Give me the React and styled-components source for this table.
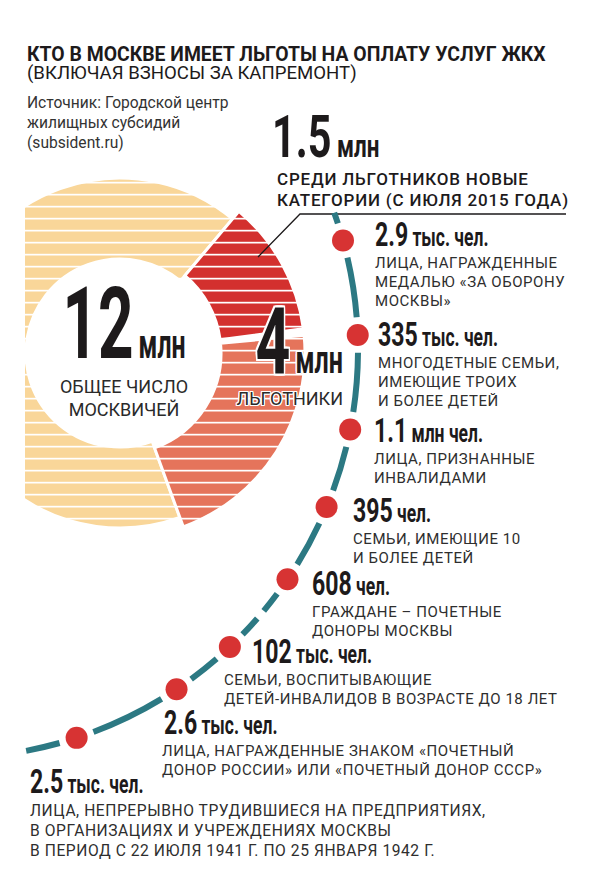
import React from 'react';
import styled, { createGlobalStyle } from 'styled-components';

const GlobalStyle = createGlobalStyle`
  html, body {
    margin: 0;
    padding: 0;
    background: #fff;
  }
  body {
    font-family: Roboto, "Liberation Sans", sans-serif;
    color: #231f20;
  }
`;

const YELLOW = '#f9d699';
const RED = '#d3302e';
const SALMON = '#e5745b';
const TEAL = '#2c7983';
const DOT = '#d73333';

// donut
const DC = { x: 120, y: 353 };
// dashed arc
const AC = { x: -50, y: 350, r: 408 };

const DASHES = [
  [-19.66, -18.08], [-13.08, -4.6], [0.4, 8.73], [13.73, 20.13], [25.13, 31.69],
  [36.69, 39.74], [41.14, 44.19], [49.19, 53.77], [58.77, 69.42], [74.42, 79.24],
];
const DOTS = [-15.58, -2.1, 11.23, 22.63, 34.19, 46.69, 56.27, 71.92];

const ITEMS = [
  { num: '2.9', unit: 'тыс. чел.', x: 375, y: 223, desc: ['ЛИЦА, НАГРАЖДЕННЫЕ', 'МЕДАЛЬЮ «ЗА ОБОРОНУ', 'МОСКВЫ»'] },
  { num: '335', unit: 'тыс. чел.', x: 378, y: 323, desc: ['МНОГОДЕТНЫЕ СЕМЬИ,', 'ИМЕЮЩИЕ ТРОИХ', 'И БОЛЕЕ ДЕТЕЙ'] },
  { num: '1.1', unit: 'млн чел.', x: 374, y: 419, desc: ['ЛИЦА, ПРИЗНАННЫЕ', 'ИНВАЛИДАМИ'] },
  { num: '395', unit: 'чел.', x: 353, y: 499, desc: ['СЕМЬИ, ИМЕЮЩИЕ 10', 'И БОЛЕЕ ДЕТЕЙ'] },
  { num: '608', unit: 'чел.', x: 312, y: 572, desc: ['ГРАЖДАНЕ – ПОЧЕТНЫЕ', 'ДОНОРЫ МОСКВЫ'] },
  { num: '102', unit: 'тыс. чел.', x: 252, y: 640, dx: -28, desc: ['СЕМЬИ, ВОСПИТЫВАЮЩИЕ', 'ДЕТЕЙ-ИНВАЛИДОВ В ВОЗРАСТЕ ДО 18 ЛЕТ'] },
  { num: '2.6', unit: 'тыс. чел.', x: 164, y: 711, dx: -2, desc: ['ЛИЦА, НАГРАЖДЕННЫЕ ЗНАКОМ «ПОЧЕТНЫЙ', 'ДОНОР РОССИИ» ИЛИ «ПОЧЕТНЫЙ ДОНОР СССР»'] },
  { num: '2.5', unit: 'тыс. чел.', x: 30, y: 770, big: true, desc: ['ЛИЦА, НЕПРЕРЫВНО ТРУДИВШИЕСЯ НА ПРЕДПРИЯТИЯХ,', 'В ОРГАНИЗАЦИЯХ И УЧРЕЖДЕНИЯХ МОСКВЫ', 'В ПЕРИОД С 22 ИЮЛЯ 1941 Г. ПО 25 ЯНВАРЯ 1942 Г.'] },
];

const Page = styled.div`
  position: relative;
  width: 600px;
  height: 889px;
  overflow: hidden;
  background: #fff;
`;

const Header = styled.header`
  position: relative;
  z-index: 2;
  padding: 45px 27px 0;
`;

const Title = styled.h1`
  margin: 0;
  font-size: 19.4px;
  line-height: 19px;
  font-weight: 700;
  color: #1d1a1b;
`;

const Subtitle = styled.div`
  font-size: 18.6px;
  line-height: 19px;
  font-weight: 400;
  color: #1d1a1b;
`;

const Source = styled.p`
  margin: 10px 0 0;
  font-size: 15.6px;
  line-height: 20px;
  color: #333;
`;

const Chart = styled.svg`
  position: absolute;
  top: 0;
  left: 0;
  z-index: 0;
`;

const Pin = styled.div`
  position: absolute;
  z-index: 1;
  left: ${(p) => p.$x}px;
  top: ${(p) => p.$y}px;
`;

const NumLine = styled.div`
  white-space: nowrap;
  font-weight: 700;
  font-size: ${(p) => p.$size}px;
  line-height: ${(p) => p.$lh}px;
  color: #1d1a1b;
  transform: scaleX(${(p) => p.$sx});
  transform-origin: ${(p) => p.$origin || 'left'} center;
  text-align: ${(p) => p.$origin || 'left'};
`;

const Unit = styled.span`
  font-size: ${(p) => p.$size}px;
  line-height: 0;
  margin-left: ${(p) => p.$gap}px;
`;

const Desc = styled.div`
  margin: 4px 0 0 ${(p) => p.$dx || 0}px;
  font-size: ${(p) => (p.$big ? 15.6 : 15)}px;
  line-height: ${(p) => (p.$big ? 20 : 19)}px;
  letter-spacing: 0.56px;
  white-space: nowrap;
  color: #2e2e2e;
`;

const Lead = styled.div`
  margin: 7px 0 0 5px;
  font-size: 17px;
  line-height: 21px;
  font-weight: 500;
  letter-spacing: 0.8px;
  white-space: nowrap;
  color: #1d1a1b;
`;

const Center = styled.div`
  position: absolute;
  z-index: 1;
  left: ${(p) => p.$x}px;
  top: ${(p) => p.$y}px;
  width: ${(p) => p.$w}px;
  text-align: ${(p) => p.$align};
`;

const Caption = styled.div`
  margin-top: ${(p) => p.$mt}px;
  font-size: 18px;
  line-height: 23px;
  color: #2a2a2a;
  white-space: nowrap;
  ${(p) => p.$halo && `
    text-shadow: 1px 0 0 #fff, -1px 0 0 #fff, 0 1px 0 #fff, 0 -1px 0 #fff,
      1px 1px 0 #fff, -1px -1px 0 #fff, 1px -1px 0 #fff, -1px 1px 0 #fff;
  `}
`;

const Halo = styled.span`
  text-shadow: 2px 0 0 #fff, -2px 0 0 #fff, 0 2px 0 #fff, 0 -2px 0 #fff,
    2px 2px 0 #fff, -2px -2px 0 #fff, 2px -2px 0 #fff, -2px 2px 0 #fff;
`;

const rad = (a) => (a * Math.PI) / 180;

const polar = (r, a) => [DC.x + r * Math.sin(rad(a)), DC.y - r * Math.cos(rad(a))];

const sector = (r0, r1, a0, a1) => {
  const large = a1 - a0 > 180 ? 1 : 0;
  const [x0, y0] = polar(r1, a0);
  const [x1, y1] = polar(r1, a1);
  const [x2, y2] = polar(r0, a1);
  const [x3, y3] = polar(r0, a0);
  return `M${x0} ${y0} A${r1} ${r1} 0 ${large} 1 ${x1} ${y1} L${x2} ${y2} A${r0} ${r0} 0 ${large} 0 ${x3} ${y3} Z`;
};

const onArc = (a) => [AC.x + AC.r * Math.cos(rad(a)), AC.y + AC.r * Math.sin(rad(a))];

const arc = (a0, a1) => {
  const [x0, y0] = onArc(a0);
  const [x1, y1] = onArc(a1);
  return `M${x0} ${y0} A${AC.r} ${AC.r} 0 0 1 ${x1} ${y1}`;
};

const Stripes = ({ id, color }) => (
  <pattern id={id} width="10" height="12" patternUnits="userSpaceOnUse">
    <rect width="10" height="12" fill={color} />
    <rect y="1.8" width="10" height="1.7" fill="#fff" />
  </pattern>
);

const Graphic = () => (
  <Chart width="600" height="889" viewBox="0 0 600 889">
    <defs>
      <Stripes id="st-y" color={YELLOW} />
      <Stripes id="st-r" color={RED} />
      <Stripes id="st-s" color={SALMON} />
      <clipPath id="cut">
        <rect x="25" y="0" width="575" height="889" />
      </clipPath>
    </defs>

    <g clipPath="url(#cut)" stroke="#fff" strokeWidth="3">
      <path d={sector(94, 175, 160, 400)} fill="url(#st-y)" />
      <path d={sector(101, 185, 40, 82.5)} fill="url(#st-r)" />
      <path d={sector(101, 185, 84.5, 160)} fill="url(#st-s)" />
    </g>

    <polyline points="258,257 300,214 566,214" fill="none" stroke="#1d1a1b" strokeWidth="1.3" />

    {DASHES.map(([a0, a1]) => (
      <path key={a0} d={arc(a0, a1)} fill="none" stroke={TEAL} strokeWidth="6" />
    ))}
    {DOTS.map((a) => {
      const [x, y] = onArc(a);
      return <circle key={a} cx={x} cy={y} r="11" fill={DOT} />;
    })}
  </Chart>
);

const Item = ({ num, unit, x, y, dx, big, desc }) => (
  <Pin $x={x} $y={y - 3}>
    <NumLine $size={33} $lh={30} $sx={0.7}>
      {num}
      <Unit $size={25} $gap={6}>{unit}</Unit>
    </NumLine>
    <Desc $dx={dx} $big={big}>
      {desc.map((line) => <div key={line}>{line}</div>)}
    </Desc>
  </Pin>
);

const App = () => (
  <Page>
    <GlobalStyle />
    <Graphic />

    <Header>
      <Title>КТО В МОСКВЕ ИМЕЕТ ЛЬГОТЫ НА ОПЛАТУ УСЛУГ ЖКХ</Title>
      <Subtitle>(ВКЛЮЧАЯ ВЗНОСЫ ЗА КАПРЕМОНТ)</Subtitle>
      <Source>
        Источник: Городской центр
        <br />
        жилищных субсидий
        <br />
        (subsident.ru)
      </Source>
    </Header>

    <Pin $x={272} $y={112}>
      <NumLine $size={59} $lh={50} $sx={0.7}>
        1.5
        <Unit $size={32} $gap={8}>млн</Unit>
      </NumLine>
      <Lead>
        СРЕДИ ЛЬГОТНИКОВ НОВЫЕ
        <br />
        КАТЕГОРИИ (С ИЮЛЯ 2015 ГОДА)
      </Lead>
    </Pin>

    <Center $x={24} $y={284} $w={200} $align="center">
      <NumLine $size={100} $lh={80} $sx={0.62} $origin="center">
        12
        <Unit $size={40} $gap={8}>млн</Unit>
      </NumLine>
      <Caption $mt={11}>
        ОБЩЕЕ ЧИСЛО
        <br />
        МОСКВИЧЕЙ
      </Caption>
    </Center>

    <Center $x={143} $y={302} $w={200} $align="right">
      <NumLine $size={92} $lh={80} $sx={0.66} $origin="right">
        <Halo>4</Halo>
        <Unit $size={38} $gap={8}><Halo>млн</Halo></Unit>
      </NumLine>
      <Caption $mt={5} $halo>ЛЬГОТНИКИ</Caption>
    </Center>

    {ITEMS.map((item) => <Item key={item.num} {...item} />)}
  </Page>
);

export default App;
